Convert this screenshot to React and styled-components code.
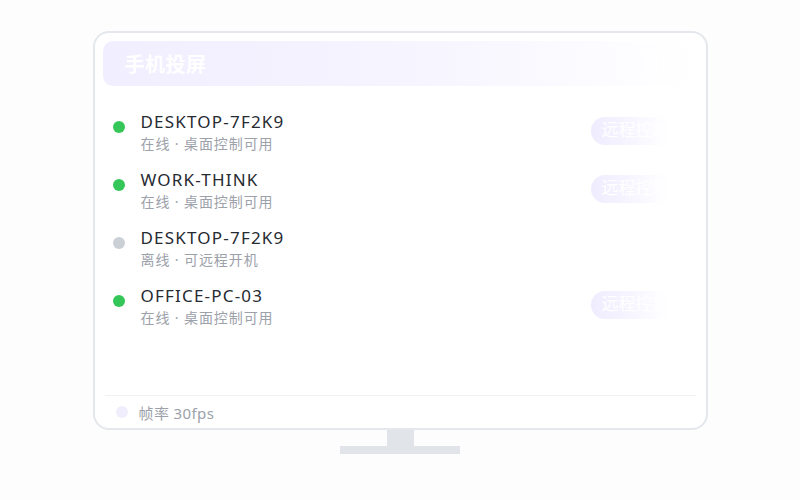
import React from "react";
import styled, { createGlobalStyle } from "styled-components";

const GlobalStyle = createGlobalStyle`
  html, body {
    margin: 0;
    padding: 0;
    background: #fdfdfd;
    font-family: "Noto Sans", "Noto Sans CJK SC", sans-serif;
  }
`;

const devices = [
  { name: "DESKTOP-7F2K9", status: "在线 · 桌面控制可用", online: true },
  { name: "WORK-THINK", status: "在线 · 桌面控制可用", online: true },
  { name: "DESKTOP-7F2K9", status: "离线 · 可远程开机", online: false },
  { name: "OFFICE-PC-03", status: "在线 · 桌面控制可用", online: true },
];

export default function App() {
  return (
    <>
      <GlobalStyle />
      <Page>
        <Screen>
          <Header>
            <Title>手机投屏</Title>
            <HeaderTag>ON</HeaderTag>
          </Header>
          <List>
            {devices.map((d, i) => (
              <Row key={i}>
                <Dot $online={d.online} />
                <Info>
                  <Name>{d.name}</Name>
                  <Status>{d.status}</Status>
                </Info>
                {d.online && <RemoteButton>远程控制</RemoteButton>}
              </Row>
            ))}
          </List>
          <Footer>
            <FooterDot />
            <FooterText>帧率 30fps</FooterText>
          </Footer>
        </Screen>
        <Neck />
        <Base />
      </Page>
    </>
  );
}

const Page = styled.div`
  display: flex;
  flex-direction: column;
  align-items: center;
  padding-top: 31px;
  height: 469px;
`;

const Screen = styled.div`
  box-sizing: border-box;
  width: 615px;
  height: 399px;
  border: 2px solid #e4e7eb;
  border-radius: 16px;
  background: #fff;
  padding: 8px 10px 0 8px;
  display: flex;
  flex-direction: column;
`;

const Header = styled.div`
  height: 45px;
  border-radius: 10px;
  background: linear-gradient(90deg, #f1eeff 0%, #f6f4ff 50%, #ffffff 100%);
  display: flex;
  align-items: center;
  justify-content: space-between;
  padding: 0 30px 0 22px;
`;

const Title = styled.div`
  color: #fff;
  font-family: "Noto Sans CJK SC", sans-serif;
  font-size: 20px;
  font-weight: 700;
  letter-spacing: 0.5px;
`;

const HeaderTag = styled.div`
  color: #fff;
  font-size: 14px;
  font-weight: 700;
`;

const List = styled.div`
  margin-top: 18px;
  flex: 1;
  display: flex;
  flex-direction: column;
`;

const Row = styled.div`
  display: flex;
  align-items: flex-start;
  padding: 7px 10px;
  height: 44px;
`;

const Dot = styled.span`
  width: 12px;
  height: 12px;
  border-radius: 50%;
  background: ${(p) => (p.$online ? "#34c659" : "#cbcfd6")};
  margin-top: 10px;
  flex-shrink: 0;
`;

const Info = styled.div`
  margin-left: 16px;
  display: flex;
  flex-direction: column;
  flex: 1;
`;

const Name = styled.div`
  font-size: 17px;
  line-height: 22px;
  color: #262a31;
  letter-spacing: 1.2px;
`;

const Status = styled.div`
  font-size: 14px;
  line-height: 18px;
  color: #9ca1aa;
  margin-top: 2px;
  letter-spacing: 0.9px;
`;

const RemoteButton = styled.div`
  align-self: center;
  margin-top: -4px;
  width: 90px;
  height: 28px;
  border-radius: 14px;
  background: linear-gradient(90deg, #efecff 0%, #f6f4ff 40%, rgba(255, 255, 255, 0) 85%);
  color: #fff;
  font-family: "Liberation Serif", "Noto Sans CJK SC", serif;
  font-size: 17px;
  line-height: 28px;
  padding-left: 11px;
  box-sizing: border-box;
  white-space: nowrap;
  overflow: hidden;
  margin-right: 5px;
`;

const Footer = styled.div`
  height: 32px;
  border-top: 1px solid #eef0f3;
  margin-left: 2px;
  display: flex;
  align-items: center;
  padding-left: 11px;
`;

const FooterDot = styled.span`
  width: 12px;
  height: 12px;
  border-radius: 50%;
  background: #f0edfc;
`;

const FooterText = styled.span`
  margin-left: 11px;
  font-size: 15px;
  color: #9ca1aa;
  letter-spacing: 0.4px;
`;

const Neck = styled.div`
  width: 27px;
  height: 16px;
  background: #e1e4e8;
`;

const Base = styled.div`
  width: 120px;
  height: 8px;
  background: #e1e4e8;
`;
